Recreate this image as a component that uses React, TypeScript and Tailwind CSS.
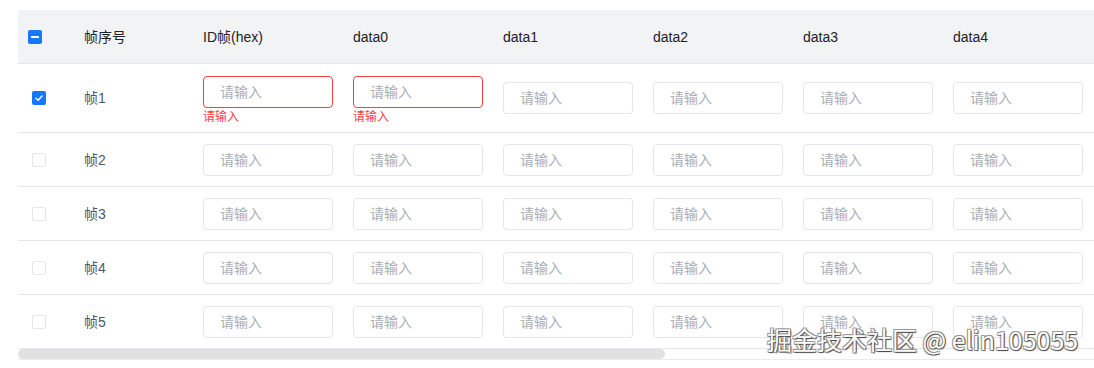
import React from "react"

const FONT = "font-['Liberation_Sans','Noto_Sans_CJK_SC',sans-serif]"
const COLS = ["ID帧(hex)", "data0", "data1", "data2", "data3", "data4"]
const ROWS = ["帧1", "帧2", "帧3", "帧4", "帧5"]

function Checkbox({ state }: { state: "on" | "off" | "some" }) {
  if (state === "off") {
    return <span className="block w-[14px] h-[14px] rounded-[2px] border border-[#e5e6eb] bg-white" />
  }
  return (
    <span className="flex items-center justify-center w-[14px] h-[14px] rounded-[2px] bg-[#1677ff]">
      {state === "some" ? (
        <span className="block w-[8px] h-[2px] bg-white" />
      ) : (
        <svg width="10" height="10" viewBox="0 0 10 10" fill="none">
          <path d="M2 5.2 L4.2 7.2 L8 3" stroke="white" strokeWidth="1.4" strokeLinecap="round" strokeLinejoin="round" />
        </svg>
      )}
    </span>
  )
}

function Field({ error }: { error?: boolean }) {
  const box = (
    <div
      className={`h-[32px] w-[130px] rounded-[4px] border bg-white flex items-center pl-[16px] text-sm text-[#a9aeb8] ${
        error ? "border-[#f53f3f]" : "border-[#e5e6eb]"
      }`}
    >
      请输入
    </div>
  )
  if (!error) return box
  return (
    <div className="flex flex-col mt-[4px]">
      {box}
      <div className="h-[14px] text-xs leading-[14px] text-[#f53f3f] mt-[2px]">请输入</div>
    </div>
  )
}

export default function App() {
  return (
    <div className={`relative w-[1094px] h-[368px] bg-white pt-[10px] pl-[18px] overflow-hidden ${FONT}`}>
      <div className="w-[1076px]">
        {/* header */}
        <div className="grid grid-cols-[54px_119px_repeat(6,150px)_1fr] h-[54px] bg-[#f2f3f5] border-b border-[#e5e6eb] text-sm text-[#1d2129]">
          <div className="flex items-center pl-[10px]">
            <Checkbox state="some" />
          </div>
          <div className="flex items-center pl-[12px]">帧序号</div>
          {COLS.map((c) => (
            <div key={c} className="flex items-center pl-[12px]">
              {c}
            </div>
          ))}
          <div />
        </div>

        {/* body */}
        {ROWS.map((r, i) => (
          <div
            key={r}
            className={`grid grid-cols-[54px_119px_repeat(6,150px)_1fr] border-b border-[#e5e6eb] text-sm text-[#4e5969] ${
              i === 0 ? "h-[69px]" : "h-[54px]"
            }`}
          >
            <div className="flex items-center pl-[14px]">
              <Checkbox state={i === 0 ? "on" : "off"} />
            </div>
            <div className="flex items-center pl-[12px]">{r}</div>
            {COLS.map((c, j) => (
              <div key={c} className="flex items-center pl-[12px]">
                <Field error={i === 0 && j < 2} />
              </div>
            ))}
            <div />
          </div>
        ))}

        {/* horizontal scrollbar */}
        <div className="h-[11px] border-b border-[#ebebeb]">
          <div className="w-[647px] h-[10px] rounded-full bg-[#e1e1e1]" />
        </div>
      </div>

      {/* watermark */}
      <div className="absolute left-[767px] top-[324px] text-[25px] leading-[30px] text-white whitespace-nowrap font-['Noto_Sans_CJK_SC',sans-serif] [text-shadow:1px_1px_1px_#444,-1px_-1px_0_#999,1px_-1px_0_#999,-1px_1px_0_#999]">
        掘金技术社区 @ elin105055
      </div>
    </div>
  )
}
